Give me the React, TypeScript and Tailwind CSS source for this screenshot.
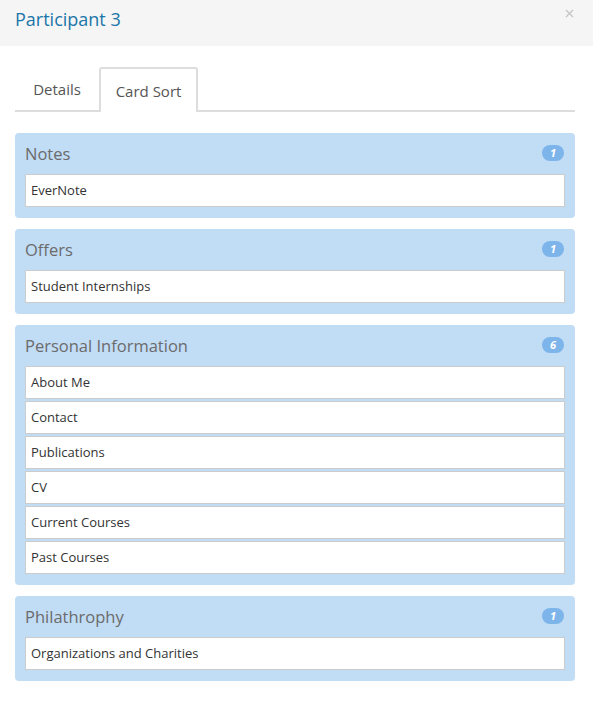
const groups = [
  { title: "Notes", items: ["EverNote"] },
  { title: "Offers", items: ["Student Internships"] },
  {
    title: "Personal Information",
    items: ["About Me", "Contact", "Publications", "CV", "Current Courses", "Past Courses"],
  },
  { title: "Philathrophy", items: ["Organizations and Charities"] },
];

export default function App() {
  return (
    <div className="min-h-screen bg-white" style={{ fontFamily: "'Open Sans', Lato, sans-serif" }}>
      {/* Header */}
      <div className="h-[46px] bg-[#f5f5f5] pl-[15px] pr-[18px] relative">
        <h1 className="text-[18px] text-[#1b75a8] leading-none pt-[10px]">Participant 3</h1>
        <button className="absolute right-[19px] top-[9px] text-[#c4c4c4]">
          <svg width="9" height="9" viewBox="0 0 9 9" fill="none" stroke="currentColor" strokeWidth="1.3">
            <path d="M1 1 L8 8 M8 1 L1 8" />
          </svg>
        </button>
      </div>

      <div className="pl-[15px] pr-[18px] pt-[21px]">
        {/* Tabs */}
        <div className="flex border-b-2 border-[#ddd] h-[45px]">
          <div className="w-[84px] flex items-center justify-center text-[15px] text-[#555] pt-[1px]">Details</div>
          <div className="w-[99px] -mb-[2px] flex items-center justify-center text-[15px] text-[#555] bg-white border-2 border-b-0 border-[#ddd] rounded-t-[3px] pt-[1px]">
            Card Sort
          </div>
        </div>

        {/* Groups */}
        <div className="flex flex-col gap-[11px] mt-[21px]">
          {groups.map((g) => (
            <div key={g.title} className="bg-[#c1dcf5] rounded-[4px] px-[10px] pb-[11px]">
              <div className="h-[41px] flex items-center justify-between">
                <span className="text-[16.5px] text-[#6b6b6b] pt-[1px]">{g.title}</span>
                <span className="h-[16px] w-[22px] mr-[1px] rounded-full bg-[#7db4ea] text-white text-[11px] font-bold italic flex items-center justify-center -mt-[1px]">
                  {g.items.length}
                </span>
              </div>
              <div className="flex flex-col gap-[2px]">
                {g.items.map((it) => (
                  <div
                    key={it}
                    className="h-[33px] bg-white border border-[#ccc] flex items-center px-[5px] text-[13px] text-[#333]"
                  >
                    {it}
                  </div>
                ))}
              </div>
            </div>
          ))}
        </div>
      </div>
    </div>
  );
}
